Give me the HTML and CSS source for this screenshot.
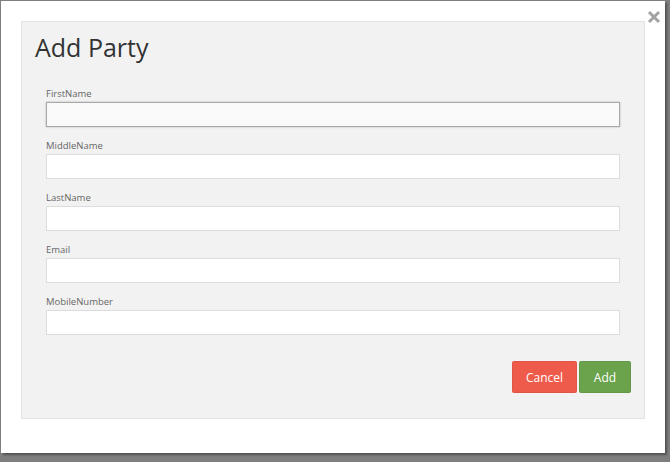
FILE: index.html
```html
<!DOCTYPE html>
<html>
<head>
<meta charset="utf-8">
<link rel="stylesheet" href="styles.css">
</head>
<body>
<div class="modal">
  <button class="close" aria-label="Close">
    <svg width="14" height="14" viewBox="0 0 14 14"><path d="M2 2 L12 12 M12 2 L2 12" stroke="#a3a3a3" stroke-width="3" stroke-linecap="butt"/></svg>
  </button>
  <div class="panel">
    <h2 class="title">Add Party</h2>
    <div class="form">
      <div class="group"><label class="label">FirstName</label><input class="field focused" type="text"></div>
      <div class="group"><label class="label">MiddleName</label><input class="field" type="text"></div>
      <div class="group"><label class="label">LastName</label><input class="field" type="text"></div>
      <div class="group"><label class="label">Email</label><input class="field" type="text"></div>
      <div class="group"><label class="label">MobileNumber</label><input class="field" type="text"></div>
    </div>
    <div class="actions">
      <button class="btn cancel">Cancel</button>
      <button class="btn add">Add</button>
    </div>
  </div>
</div>
</body>
</html>
```
FILE: styles.css
```css
html, body {
  margin: 0;
  padding: 0;
}
body {
  background: #7e7e7e;
  width: 670px;
  height: 462px;
  overflow: hidden;
  font-family: "Open Sans", "Liberation Sans", sans-serif;
}
.modal {
  position: relative;
  margin: 1px 0 0 1px;
  width: 664px;
  height: 452px;
  box-sizing: border-box;
  background: #fff;
  padding: 20px;
  box-shadow: 2px 2px 2px rgba(0, 0, 0, 0.35);
}
.close {
  position: absolute;
  top: 9px;
  left: 646px;
  width: 14px;
  height: 14px;
  padding: 0;
  border: 0;
  background: transparent;
  display: block;
}
.close svg {
  display: block;
}
.panel {
  box-sizing: border-box;
  height: 398px;
  background: #f2f2f2;
  border: 1px solid #e2e2e2;
  padding: 7px 13px 0 13px;
}
.title {
  margin: 0;
  font-size: 25px;
  line-height: 36px;
  font-weight: 400;
  color: #333;
}
.form {
  margin-top: 22px;
  padding: 0 11px;
}
.group {
  margin-bottom: 12px;
}
.label {
  display: block;
  font-size: 9.5px;
  line-height: 14px;
  margin-bottom: 1px;
  color: #666;
}
.field {
  display: block;
  box-sizing: border-box;
  width: 100%;
  height: 25px;
  margin: 0;
  border: 1px solid #dcdcdc;
  background: #fff;
  outline: none;
  font-family: inherit;
}
.field.focused {
  border-color: #a8a8a8;
  background: #fafafa;
  box-shadow: 0 0 2px rgba(0, 0, 0, 0.25);
}
.actions {
  display: flex;
  justify-content: flex-end;
  gap: 2px;
  margin-top: 26px;
}
.btn {
  height: 32px;
  border: 1px solid rgba(0, 0, 0, 0.06);
  border-radius: 2px;
  color: #fff;
  font-family: inherit;
  font-size: 12px;
  padding: 0;
}
.cancel {
  width: 65px;
  background: #ee5b4b;
}
.add {
  width: 52px;
  background: #6aa34b;
}
```
